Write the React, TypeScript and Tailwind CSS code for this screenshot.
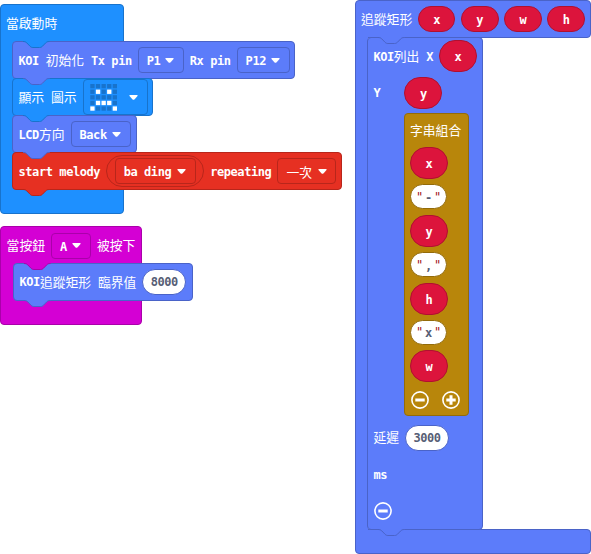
import type { ReactNode } from "react";

const FONT =
  "font-['DejaVu_Sans_Mono','Noto_Sans_CJK_TC',monospace] text-[12px] tracking-[-0.42px] font-bold leading-none";

/** Latin block label in the fixed-pitch face. */
function L({ children, className = "top-px" }: { children: ReactNode; className?: string }) {
  return <span className={`relative shrink-0 whitespace-pre ${className}`}>{children}</span>;
}

/** Chinese block label. */
function C({ children }: { children: ReactNode }) {
  return (
    <span className="shrink-0 whitespace-pre font-['Noto_Sans_CJK_TC',sans-serif] text-[12.8px] font-normal leading-none tracking-normal">
      {children}
    </span>
  );
}

function Caret() {
  return (
    <svg className="h-[5px] w-[9px] shrink-0" viewBox="0 0 9 5">
      <path d="M1 0H8Q9 .3 8.5 1.1L5.4 4.4Q4.5 5.3 3.6 4.4L.5 1.1Q0 .3 1 0Z" fill="white" />
    </svg>
  );
}

/** The connector that hangs from one block into the top of the next. */
function Tab({ fill, stroke, className }: { fill: string; stroke: string; className: string }) {
  return (
    <svg className={`absolute z-10 h-[8px] w-[27px] ${className}`} viewBox="0 0 27 8">
      <path
        d="M0 .5C1.8 .5 2.8 .9 3.8 1.9L7 5.2C8 6.2 8.8 6.5 10 6.5H16.5C17.7 6.5 18.5 6.2 19.5 5.2L22.7 1.9C23.7 .9 24.7 .5 26.5 .5V0H0Z"
        fill={fill}
      />
      <path
        d="M0 .5C1.8 .5 2.8 .9 3.8 1.9L7 5.2C8 6.2 8.8 6.5 10 6.5H16.5C17.7 6.5 18.5 6.2 19.5 5.2L22.7 1.9C23.7 .9 24.7 .5 26.5 .5"
        fill="none"
        stroke={stroke}
      />
    </svg>
  );
}

function Dropdown({ children, className }: { children: ReactNode; className: string }) {
  return (
    <span className={`flex h-[26px] shrink-0 items-center justify-between rounded border pr-[8.5px] pl-[8px] ${className}`}>
      <span className="whitespace-pre pt-[2px]">{children}</span>
      <Caret />
    </span>
  );
}

function Row({ children, className }: { children: ReactNode; className: string }) {
  return (
    <div className={`relative flex h-[38px] items-center gap-[6px] rounded border pl-[5.5px] ${className}`}>
      {children}
    </div>
  );
}

function Text({ children }: { children: ReactNode }) {
  return <span className="flex shrink-0 items-center">{children}</span>;
}

function Variable({ name, className }: { name: string; className: string }) {
  return (
    <span className={`flex shrink-0 items-center justify-center border border-[#b01030] bg-[#dc143c] pt-[2px] ${className}`}>
      {name}
    </span>
  );
}

function NumberField({ value }: { value: string }) {
  return (
    <span className="flex h-[26px] w-[44px] shrink-0 items-center justify-center rounded-full border border-[#4a63c8] bg-white text-[#575e75]">
      {value}
    </span>
  );
}

function StringField({ value }: { value: string }) {
  return (
    <span className="flex h-[25px] w-[37px] shrink-0 items-center justify-center rounded-full border border-[#936b09] bg-white text-[#575e75]">
      <i className="w-[9px] text-center font-normal text-[#a31515] not-italic">"</i>
      <span className="w-[9px] pt-[2px] text-center">{value}</span>
      <i className="w-[9px] text-center font-normal text-[#a31515] not-italic">"</i>
    </span>
  );
}

function RoundButton({ plus = false }: { plus?: boolean }) {
  return (
    <svg className="h-[18px] w-[18px] shrink-0" viewBox="0 0 18 18" fill="none" stroke="white">
      <circle cx="9" cy="9" r="8.1" strokeWidth="1.6" />
      <path d={plus ? "M4.3 9H13.7M9 4.3V13.7" : "M4.3 9H13.7"} strokeWidth="3" />
    </svg>
  );
}

const FACE = [".....", ".#.#.", ".....", ".###.", "#...#"];

function LedFace() {
  return (
    <svg className="h-[27px] w-[27px] shrink-0" viewBox="0 0 27 27">
      {FACE.join("").split("").map((c, i) => (
        <rect
          key={i}
          x={0.3 + (i % 5) * 5.6}
          y={Math.floor(i / 5) * 5.6}
          width="4.3"
          height="4.3"
          fill={c === "#" ? "white" : "#1873cc"}
        />
      ))}
    </svg>
  );
}

const BLUE = "border-[#4a63c8] bg-[#5c7cfa]";
const AZURE = "border-[#1873cc] bg-[#1e90ff]";
const RED = "border-[#b8261b] bg-[#e63022]";

function OnStart() {
  return (
    <section className="absolute top-[4px] left-0 w-[124px]">
      <div className={`flex h-[210px] flex-col rounded border ${AZURE}`}>
        <div className="flex h-[36px] items-center pl-[5px]">
          <C>當啟動時</C>
        </div>
        <div className="ml-[11px] flex flex-col -space-y-px">
          <Row className={`w-[283px] ${BLUE}`}>
            <Tab fill="#1e90ff" stroke="#1873cc" className="-top-px left-[10px]" />
            <Text>
              <L>KOI </L>
              <C>初始化</C>
              <L> Tx pin</L>
            </Text>
            <Dropdown className="w-[46px] border-[#4a63c8]">P1</Dropdown>
            <L>Rx pin</L>
            <Dropdown className="w-[53px] border-[#4a63c8]">P12</Dropdown>
            <Tab fill="#5c7cfa" stroke="#4a63c8" className="top-[36px] left-[10px]" />
          </Row>
          <Row className={`w-[141px] ${AZURE}`}>
            <Text>
              <C>顯示</C>
              <L> </L>
              <C>圖示</C>
            </Text>
            <span className="flex h-[36px] w-[65px] items-center justify-between rounded border border-[#1873cc] pr-[9px] pl-[6px]">
              <LedFace />
              <Caret />
            </span>
            <Tab fill="#1e90ff" stroke="#1873cc" className="top-[36px] left-[10px]" />
          </Row>
          <Row className={`w-[125px] ${BLUE}`}>
            <Text>
              <L>LCD</L>
              <C>方向</C>
            </Text>
            <Dropdown className="w-[60px] border-[#4a63c8]">Back</Dropdown>
            <Tab fill="#5c7cfa" stroke="#4a63c8" className="top-[36px] left-[10px]" />
          </Row>
          <Row className={`w-[330px] ${RED}`}>
            <L>start melody</L>
            <span className="flex h-[32px] w-[98px] shrink-0 items-center justify-center rounded-full border border-[#b8261b]">
              <Dropdown className="w-[81px] border-[#b8261b]">ba ding</Dropdown>
            </span>
            <L>repeating</L>
            <Dropdown className="w-[59px] border-[#b8261b]">
              <C>一次</C>
            </Dropdown>
            <Tab fill="#e63022" stroke="#b8261b" className="top-[36px] left-[10px]" />
          </Row>
        </div>
      </div>
    </section>
  );
}

function OnButton() {
  return (
    <section className="absolute top-[226px] left-0 w-[142px]">
      <div className="flex h-[99px] flex-col rounded border border-[#aa00aa] bg-[#d400d4]">
        <div className="flex h-[36px] items-center gap-[6px] pt-px pl-[5.6px]">
          <C>當按鈕</C>
          <Dropdown className="w-[40px] border-[#aa00aa]">A</Dropdown>
          <C>被按下</C>
        </div>
        <Row className={`ml-[12px] w-[180px] ${BLUE}`}>
          <Tab fill="#d400d4" stroke="#aa00aa" className="-top-px left-[10px]" />
          <Text>
            <L className="top-0">KOI</L>
            <C>追蹤矩形</C>
            <L> </L>
            <C>臨界值</C>
          </Text>
          <NumberField value="8000" />
          <Tab fill="#5c7cfa" stroke="#4a63c8" className="top-[36px] left-[10px]" />
        </Row>
      </div>
    </section>
  );
}

const JOINED = ["x", "-", "y", ",", "h", "x", "w"];

function JoinStrings() {
  return (
    <div className="flex h-[303px] w-[65px] flex-col rounded border border-[#936b09] bg-[#b8860b] pl-[5px]">
      <div className="flex h-[33px] items-center">
        <C>字串組合</C>
      </div>
      <div className="flex flex-col gap-[5.4px]">
        {JOINED.map((v, i) =>
          i % 2 === 0 ? (
            <Variable key={i} name={v} className="h-[32px] w-[38px] rounded-full" />
          ) : (
            <StringField key={i} value={v} />
          ),
        )}
      </div>
      <div className="mt-[9px] ml-[0.6px] flex gap-[13px]">
        <RoundButton />
        <RoundButton plus />
      </div>
    </div>
  );
}

function TrackRect() {
  return (
    <section className="absolute top-0 left-[355px] w-[236px]">
      <div className={`flex h-[38px] items-center gap-[5.5px] rounded-t rounded-br border pl-[5px] ${BLUE}`}>
        <C>追蹤矩形</C>
        {["x", "y", "w", "h"].map((v) => (
          <Variable key={v} name={v} className="h-[26px] w-[37.7px] rounded-full" />
        ))}
      </div>
      <div className="relative z-10 -my-px flex h-[493px]">
        <div className="w-[13px] shrink-0 border-l border-[#4a63c8] bg-[#5c7cfa]" />
        <div className={`relative -ml-px flex w-[116px] flex-col rounded border pl-[5.4px] ${BLUE}`}>
          <Tab fill="#5c7cfa" stroke="#4a63c8" className="-top-px left-[10px]" />
          <div className="flex h-[36px] items-center gap-[6px]">
            <Text>
              <L>KOI</L>
              <C>列出</C>
              <L> X</L>
            </Text>
            <Variable name="x" className="h-[32px] w-[38px] rounded-full" />
          </div>
          <div className="flex h-[37px] items-center">
            <L className="top-0 w-[31px]">Y</L>
            <Variable name="y" className="h-[32px] w-[38px] rounded-full" />
          </div>
          <div className="mt-[2px] ml-[30.6px]">
            <JoinStrings />
          </div>
          <div className="mt-[9px] flex h-[25px] items-center gap-[6px]">
            <C>延遲</C>
            <NumberField value="3000" />
          </div>
          <div className="mt-[20px] flex h-[12px] items-center">
            <L className="-top-px">ms</L>
          </div>
          <div className="mt-[20px] ml-[0.6px]">
            <RoundButton />
          </div>
          <Tab fill="#5c7cfa" stroke="#4a63c8" className="top-[491px] left-[10px]" />
        </div>
      </div>
      <div className="h-[25px] rounded-tr rounded-b border border-[#4a63c8] bg-[#5c7cfa]" />
    </section>
  );
}

export default function App() {
  return (
    <main className={`relative h-[554px] w-[591px] overflow-hidden bg-white text-white ${FONT}`}>
      <OnStart />
      <OnButton />
      <TrackRect />
    </main>
  );
}
